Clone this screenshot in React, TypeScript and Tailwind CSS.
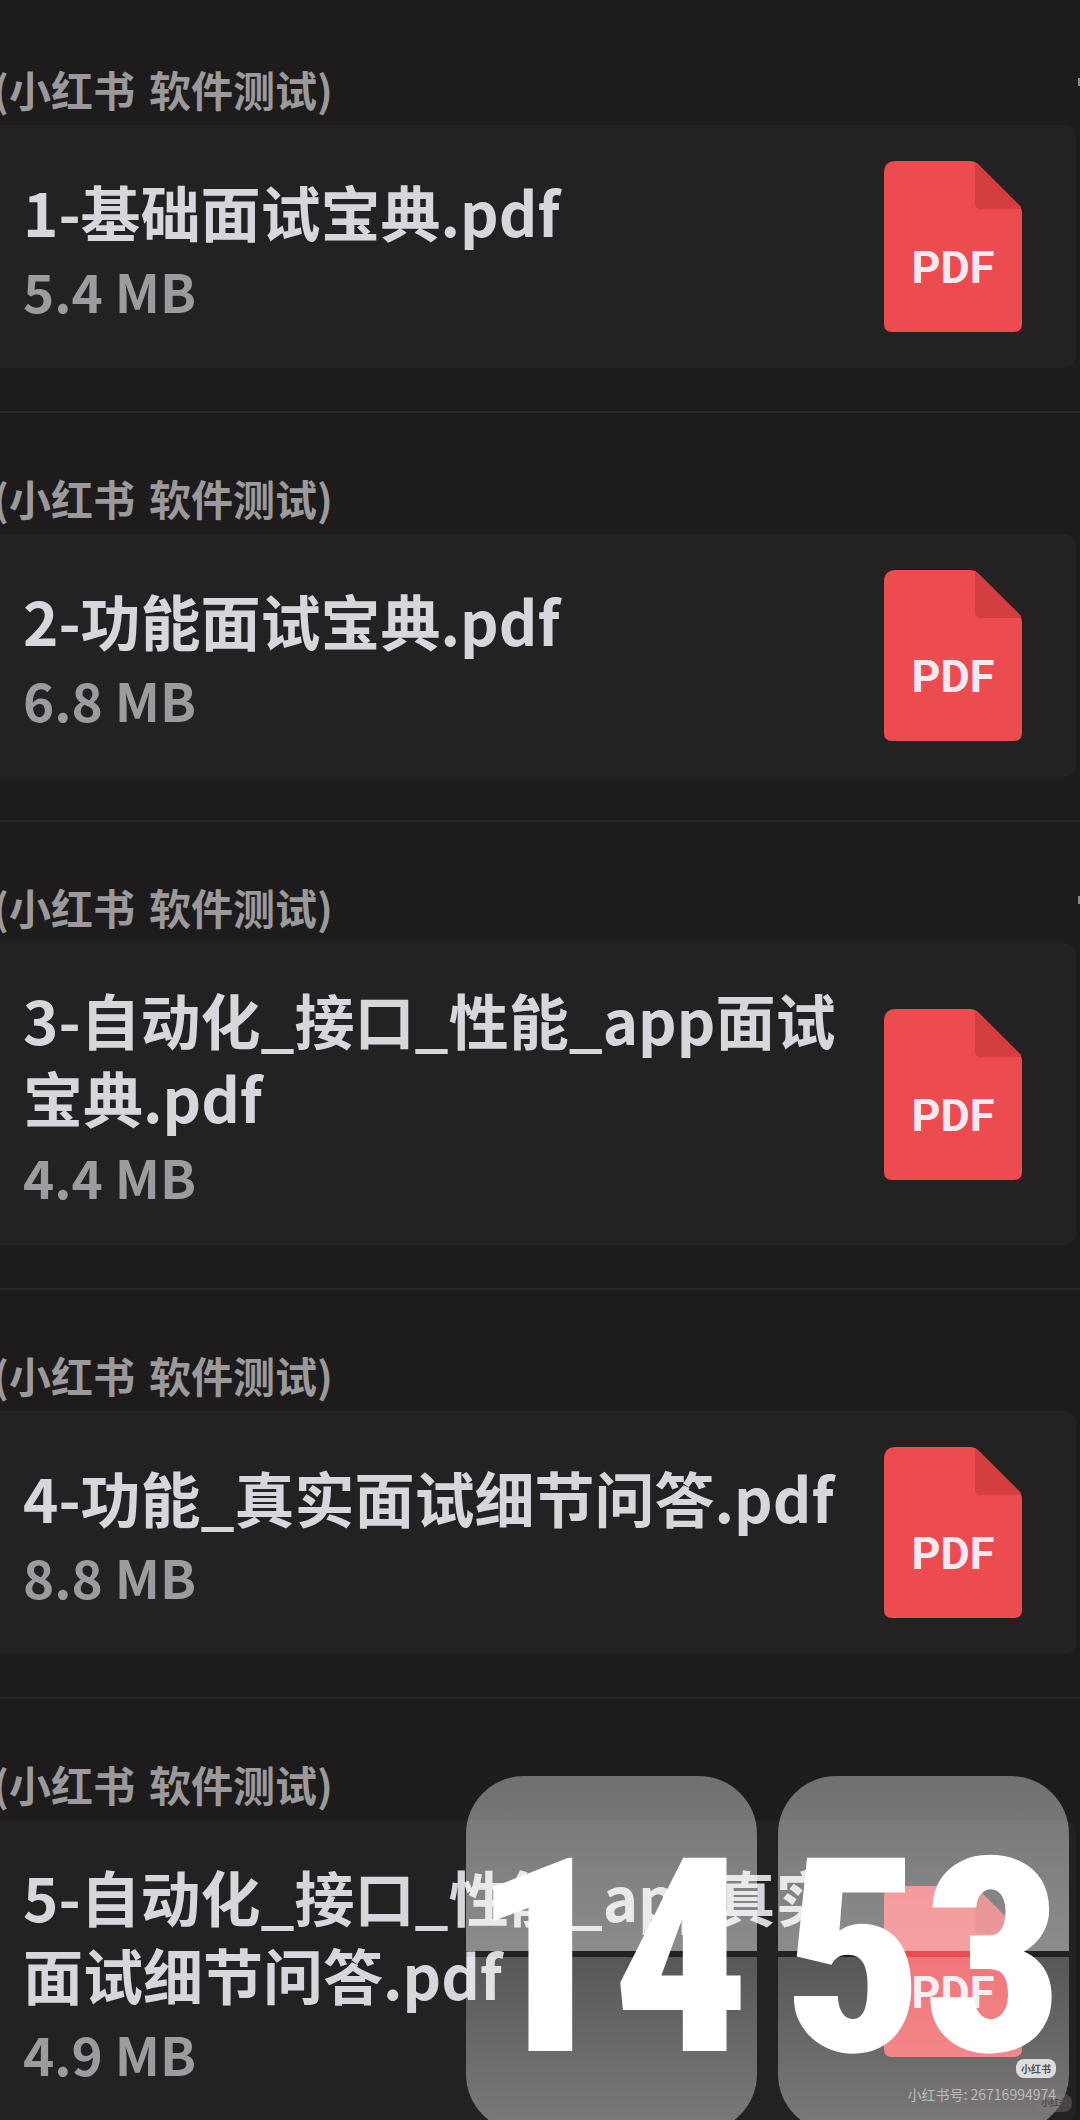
type FileItem = { title: string; size: string; tick?: boolean };

const files: FileItem[] = [
  { title: "1-基础面试宝典.pdf", size: "5.4 MB", tick: true },
  { title: "2-功能面试宝典.pdf", size: "6.8 MB" },
  { title: "3-自动化_接口_性能_app面试宝典.pdf", size: "4.4 MB", tick: true },
  { title: "4-功能_真实面试细节问答.pdf", size: "8.8 MB" },
  { title: "5-自动化_接口_性能_app真实面试细节问答.pdf", size: "4.9 MB" },
];

function PdfIcon() {
  return (
    <svg viewBox="0 0 138 171" className="my-[7px] h-[171px] w-[138px] shrink-0" role="img" aria-label="PDF">
      <path
        d="M12 0H86Q91 0 95 4L134 43Q138 47 138 52V163Q138 171 130 171H8Q0 171 0 163V12Q0 0 12 0Z"
        fill="#ec4b4f"
      />
      <path d="M91 1L137 46V48H97Q91 48 91 42Z" fill="#d43e41" />
      <text x="69" y="122" textAnchor="middle" fill="#f2eaf0" className="font-[Roboto,sans-serif] text-[45px] font-bold">
        PDF
      </text>
    </svg>
  );
}

function FileRow({ file }: { file: FileItem }) {
  return (
    <li className="border-b-2 border-[#2b2829] pt-[55px] pb-[43px]">
      <div className="flex items-start justify-between pb-[6px]">
        <p className="-ml-[7px] flex gap-3.5 text-[42px] leading-[60px] font-bold text-[#9b999c]">
          <span>(小红书</span> <span>软件测试)</span>
        </p>
        {file.tick && <span className="mt-[19px] h-2 w-[2px] bg-[#8b898b]" />}
      </div>
      <div className="mr-1 flex items-center gap-6 rounded-r-xl bg-[#242122] py-[29px] pr-[54px] pl-[23px]">
        <div className="min-w-0 flex-1 pt-2">
          <h2 className="text-[60px] leading-[78px] font-bold break-all text-[#d8d6dc]">{file.title}</h2>
          <p className="text-[53px] leading-[80px] font-bold text-[#9d9ba0]">{file.size}</p>
        </div>
        <PdfIcon />
      </div>
    </li>
  );
}

function FlipTile({ value }: { value: string }) {
  return (
    <div className="relative flex w-[291px] flex-col gap-[6px]">
      <div className="h-[175px] rounded-t-[58px] bg-linear-to-b from-white/37 to-white/48" />
      <div className="h-[175px] rounded-b-[58px] bg-linear-to-b from-white/24 to-white/40" />
      <span className="absolute inset-0 flex items-center justify-center pt-2 font-['Roboto_Condensed','Open_Sans_Condensed','Noto_Sans_Condensed','Liberation_Sans',sans-serif] text-[272px] leading-none font-black text-white">
        {value}
      </span>
    </div>
  );
}

export default function App() {
  return (
    <main className="relative h-screen overflow-hidden bg-[#1e1b1c] pt-1 font-['Noto_Sans_CJK_SC',sans-serif]">
      <ul>
        {files.map((f) => (
          <FileRow key={f.title} file={f} />
        ))}
      </ul>
      <div className="absolute right-[11px] -bottom-3 flex gap-[21px]" role="timer">
        <FlipTile value="14" />
        <FlipTile value="53" />
      </div>
      <span className="absolute right-2 bottom-2 rounded-lg bg-[#7d7b7c]/40 px-[4px] text-[9px] leading-[18px] font-bold text-[#4b494a]">小红书</span>
      <div className="absolute right-6 bottom-[14px] flex flex-col items-end gap-1">
        <span className="rounded-lg bg-[#dddcdd] px-[5px] text-[10px] leading-[19px] font-bold text-[#555]">小红书</span>
        <span className="text-[14px] leading-6 text-[#bdbcbd]">小红书号: 26716994974</span>
      </div>
    </main>
  );
}
